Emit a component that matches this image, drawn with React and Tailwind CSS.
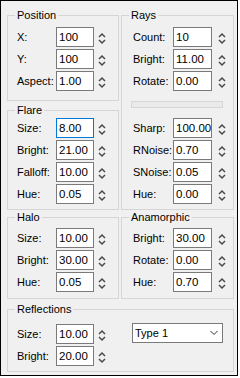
const L = { pad: "pl-[9px]", label: "w-[39px]", box: "w-[38px]", spin: "ml-[4px]" };
const R = { pad: "pl-[11px]", label: "w-[40px]", box: "w-[39px]", spin: "ml-[6px]" };

function Spin({ className }) {
  return (
    <svg width="8" height="20" viewBox="0 0 8 20" className={`shrink-0 ${className}`}>
      <polyline points="1,10 4,7 7,10" fill="none" stroke="#4a4a4a" strokeWidth="1.5" />
      <polyline points="1,13 4,16 7,13" fill="none" stroke="#4a4a4a" strokeWidth="1.5" />
    </svg>
  );
}

function Row({ label, value, focus, s }) {
  return (
    <div className={`flex h-[20px] items-center ${s.pad}`}>
      <span className={`${s.label} shrink-0 leading-[13px]`}>{label}</span>
      <div
        className={`${s.box} h-[20px] shrink-0 overflow-hidden whitespace-nowrap border bg-white pl-[2px] text-[11.5px] leading-[18px] ${
          focus ? "border-[#0078d7]" : "border-[#7a7a7a]"
        }`}
      >
        {value}
      </div>
      <Spin className={s.spin} />
    </div>
  );
}

function Group({ title, className = "", children }) {
  return (
    <fieldset className={`border border-[#d5d5d5] ${className}`}>
      <legend className="ml-[7px] px-[2px] leading-[13px]">{title}</legend>
      {children}
    </fieldset>
  );
}

function Rows({ items, s, className = "" }) {
  return (
    <div className={`flex flex-col gap-[2px] ${className}`}>
      {items.map(([label, value, focus]) => (
        <Row key={label} label={label} value={value} focus={focus} s={s} />
      ))}
    </div>
  );
}

export default function App() {
  return (
    <div className="h-[376px] w-[238px] border border-black bg-[#f0f0f0] pl-[6px] pt-[8px] font-['Liberation_Sans',Arial,sans-serif] text-[11px] text-black">
      <div className="flex w-[227px] gap-[2px]">
        {/* left column */}
        <div className="flex w-[112px] flex-col">
          <Group title="Position" className="pb-[9px]">
            <Rows
              className="mt-[5px]"
              s={L}
              items={[
                ["X:", "100"],
                ["Y:", "100"],
                ["Aspect:", "1.00"],
              ]}
            />
          </Group>
          <Group title="Flare" className="mt-[3px] pb-[5px]">
            <Rows
              className="mt-[1px]"
              s={L}
              items={[
                ["Size:", "8.00", true],
                ["Bright:", "21.00"],
                ["Falloff:", "10.00"],
                ["Hue:", "0.05"],
              ]}
            />
          </Group>
          <Group title="Halo" className="mt-[1px] pb-[6px]">
            <Rows
              className="mt-[4px]"
              s={L}
              items={[
                ["Size:", "10.00"],
                ["Bright:", "30.00"],
                ["Hue:", "0.05"],
              ]}
            />
          </Group>
        </div>

        {/* right column */}
        <div className="flex w-[113px] flex-col">
          <Group title="Rays" className="pb-[5px]">
            <Rows
              className="mt-[5px]"
              s={R}
              items={[
                ["Count:", "10"],
                ["Bright:", "11.00"],
                ["Rotate:", "0.00"],
              ]}
            />
            <div className="ml-[9px] mt-[10px] h-[7px] w-[92px] border border-[#d6d6d6] bg-[#eaeaea]" />
            <Rows
              className="mt-[10px]"
              s={R}
              items={[
                ["Sharp:", "100.00"],
                ["RNoise:", "0.70"],
                ["SNoise:", "0.05"],
                ["Hue:", "0.00"],
              ]}
            />
          </Group>
          <Group title="Anamorphic" className="mt-[1px] pb-[6px]">
            <Rows
              className="mt-[4px]"
              s={R}
              items={[
                ["Bright:", "30.00"],
                ["Rotate:", "0.00"],
                ["Hue:", "0.70"],
              ]}
            />
          </Group>
        </div>
      </div>

      <Group title="Reflections" className="mt-[4px] w-[227px] pb-[5px]">
        <div className="mt-[8px] flex items-start">
          <Rows
            s={L}
            items={[
              ["Size:", "10.00"],
              ["Bright:", "20.00"],
            ]}
          />
          <div className="-mt-px ml-[26px] flex h-[20px] w-[91px] items-center justify-between border border-[#7a7a7a] bg-white pl-[2px] pr-[4px]">
            <span className="leading-[13px]">Type 1</span>
            <svg width="8" height="6" viewBox="0 0 8 6">
              <polyline points="0.5,1 4,4.5 7.5,1" fill="none" stroke="#333" strokeWidth="1" />
            </svg>
          </div>
        </div>
      </Group>
    </div>
  );
}
